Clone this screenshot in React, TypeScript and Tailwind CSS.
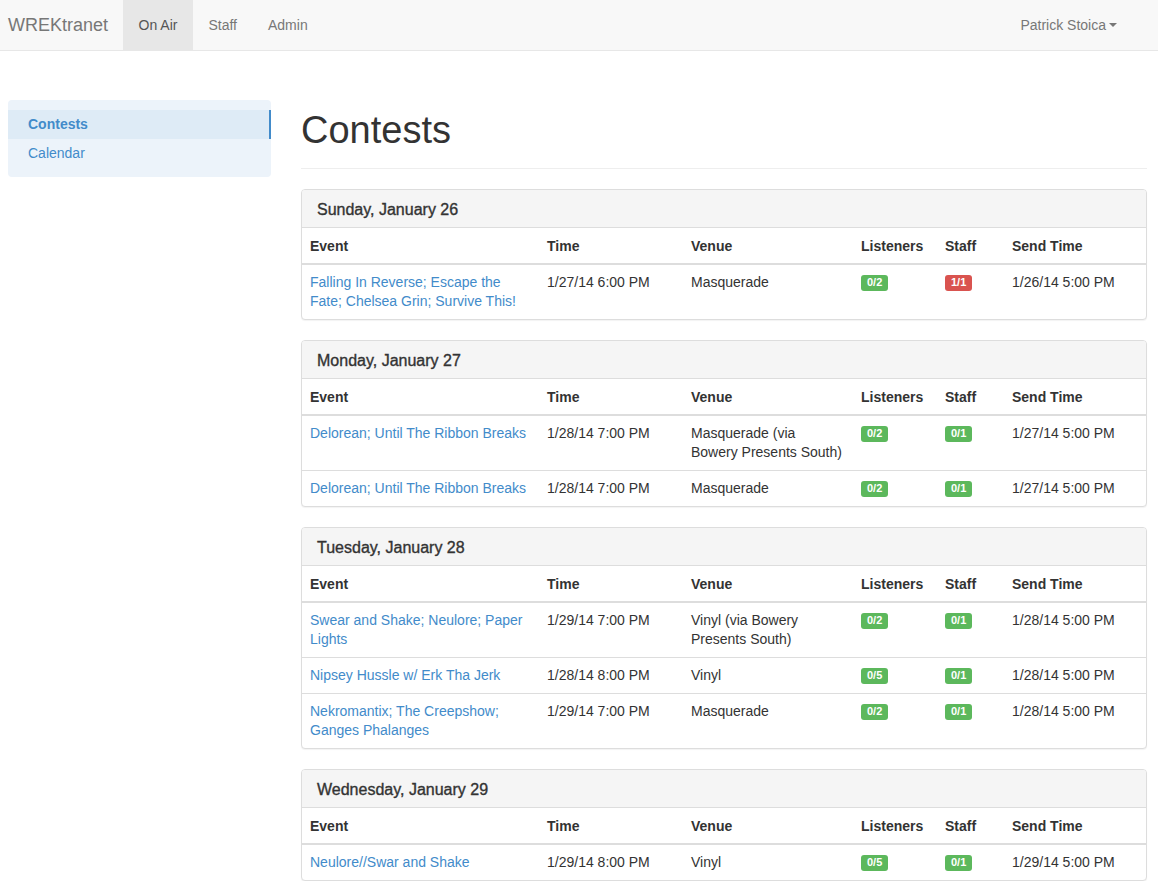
import React from "react";

type Row = {
  event: string;
  time: string;
  venue: string;
  listeners: string;
  staff: string;
  staffFull?: boolean;
  sendTime: string;
};

type Day = { title: string; rows: Row[] };

const days: Day[] = [
  {
    title: "Sunday, January 26",
    rows: [
      {
        event: "Falling In Reverse; Escape the Fate; Chelsea Grin; Survive This!",
        time: "1/27/14 6:00 PM",
        venue: "Masquerade",
        listeners: "0/2",
        staff: "1/1",
        staffFull: true,
        sendTime: "1/26/14 5:00 PM",
      },
    ],
  },
  {
    title: "Monday, January 27",
    rows: [
      {
        event: "Delorean; Until The Ribbon Breaks",
        time: "1/28/14 7:00 PM",
        venue: "Masquerade (via Bowery Presents South)",
        listeners: "0/2",
        staff: "0/1",
        sendTime: "1/27/14 5:00 PM",
      },
      {
        event: "Delorean; Until The Ribbon Breaks",
        time: "1/28/14 7:00 PM",
        venue: "Masquerade",
        listeners: "0/2",
        staff: "0/1",
        sendTime: "1/27/14 5:00 PM",
      },
    ],
  },
  {
    title: "Tuesday, January 28",
    rows: [
      {
        event: "Swear and Shake; Neulore; Paper Lights",
        time: "1/29/14 7:00 PM",
        venue: "Vinyl (via Bowery Presents South)",
        listeners: "0/2",
        staff: "0/1",
        sendTime: "1/28/14 5:00 PM",
      },
      {
        event: "Nipsey Hussle w/ Erk Tha Jerk",
        time: "1/28/14 8:00 PM",
        venue: "Vinyl",
        listeners: "0/5",
        staff: "0/1",
        sendTime: "1/28/14 5:00 PM",
      },
      {
        event: "Nekromantix; The Creepshow; Ganges Phalanges",
        time: "1/29/14 7:00 PM",
        venue: "Masquerade",
        listeners: "0/2",
        staff: "0/1",
        sendTime: "1/28/14 5:00 PM",
      },
    ],
  },
  {
    title: "Wednesday, January 29",
    rows: [
      {
        event: "Neulore//Swar and Shake",
        time: "1/29/14 8:00 PM",
        venue: "Vinyl",
        listeners: "0/5",
        staff: "0/1",
        sendTime: "1/29/14 5:00 PM",
      },
    ],
  },
];

const Label = ({ text, danger }: { text: string; danger?: boolean }) => (
  <span
    className={`inline-block rounded-[3px] px-[6px] pt-[2px] pb-[3px] text-[11px] font-bold leading-none text-white align-[1px] ${
      danger ? "bg-[#d9534f]" : "bg-[#5cb85c]"
    }`}
  >
    {text}
  </span>
);

const DayPanel = ({ day }: { day: Day }) => (
  <div className="mb-[20px] rounded-[4px] border border-[#ddd] bg-white shadow-[0_1px_1px_rgba(0,0,0,0.05)] overflow-hidden">
    <div className="bg-[#f5f5f5] border-b border-[#ddd] px-[15px] pt-[11px] pb-[9px] text-[16px] leading-[17px] text-[#333] [-webkit-text-stroke:0.35px_#333]">
      {day.title}
    </div>
    <table className="w-full table-fixed border-collapse text-[14px] leading-[19px] text-[#333]">
      <colgroup>
        <col className="w-[237px]" />
        <col className="w-[144px]" />
        <col className="w-[170px]" />
        <col className="w-[84px]" />
        <col className="w-[67px]" />
        <col />
      </colgroup>
      <thead>
        <tr className="border-b-2 border-[#ddd] text-left">
          <th className="px-[8px] pt-[9px] pb-[7px] font-bold">Event</th>
          <th className="px-[8px] pt-[9px] pb-[7px] font-bold">Time</th>
          <th className="px-[8px] pt-[9px] pb-[7px] font-bold">Venue</th>
          <th className="px-[8px] pt-[9px] pb-[7px] font-bold">Listeners</th>
          <th className="px-[8px] pt-[9px] pb-[7px] font-bold">Staff</th>
          <th className="px-[8px] pt-[9px] pb-[7px] font-bold">Send Time</th>
        </tr>
      </thead>
      <tbody>
        {day.rows.map((r, i) => (
          <tr key={i} className={i > 0 ? "border-t border-[#ddd] align-top" : "align-top"}>
            <td className="px-[8px] py-[8px]">
              <a className="text-[#428bca]" href="#">
                {r.event}
              </a>
            </td>
            <td className="px-[8px] py-[8px]">{r.time}</td>
            <td className="px-[8px] py-[8px]">{r.venue}</td>
            <td className="px-[8px] py-[8px]">
              <Label text={r.listeners} />
            </td>
            <td className="px-[8px] py-[8px]">
              <Label text={r.staff} danger={r.staffFull} />
            </td>
            <td className="px-[8px] py-[8px]">{r.sendTime}</td>
          </tr>
        ))}
      </tbody>
    </table>
  </div>
);

export default function App() {
  return (
    <div className="min-h-screen bg-white font-['Liberation_Sans',Arial,sans-serif] text-[14px] text-[#333]">
      <nav className="flex h-[51px] items-stretch border-b border-[#e7e7e7] bg-[#f8f8f8]">
        <a href="#" className="flex items-center pl-[8px] pr-[15px] text-[18px] text-[#777]">
          WREKtranet
        </a>
        <a href="#" className="flex items-center bg-[#e7e7e7] px-[15.5px] text-[#555]">
          On Air
        </a>
        <a href="#" className="flex items-center px-[15.5px] text-[#777]">
          Staff
        </a>
        <a href="#" className="flex items-center px-[15.5px] text-[#777]">
          Admin
        </a>
        <a href="#" className="ml-auto flex items-center pl-[15px] pr-[41px] text-[#777]">
          Patrick Stoica
          <span className="ml-[3px] inline-block h-0 w-0 border-x-[4px] border-t-[4px] border-x-transparent border-t-[#777]" />
        </a>
      </nav>
      <div className="flex gap-[30px] pl-[8px] pr-[11px]">
        <aside className="mt-[49px] w-[263px] shrink-0 self-start rounded-[4px] bg-[#ecf3fa] pt-[10px] pb-[10px]">
          <a
            href="#"
            className="block border-r-2 border-[#428bca] bg-[#deebf6] px-[20px] py-[5px] font-bold leading-[19px] text-[#428bca]"
          >
            Contests
          </a>
          <a href="#" className="block px-[20px] pt-[5px] pb-[4px] leading-[19px] text-[#428bca]">
            Calendar
          </a>
        </aside>
        <main className="min-w-0 flex-1">
          <div className="mt-[59px] mb-[20px] border-b border-[#eee] pb-[8px]">
            <h1 className="mb-[10px] text-[38px] font-medium leading-[40px] text-[#333]">Contests</h1>
          </div>
          {days.map((d) => (
            <DayPanel key={d.title} day={d} />
          ))}
        </main>
      </div>
    </div>
  );
}
